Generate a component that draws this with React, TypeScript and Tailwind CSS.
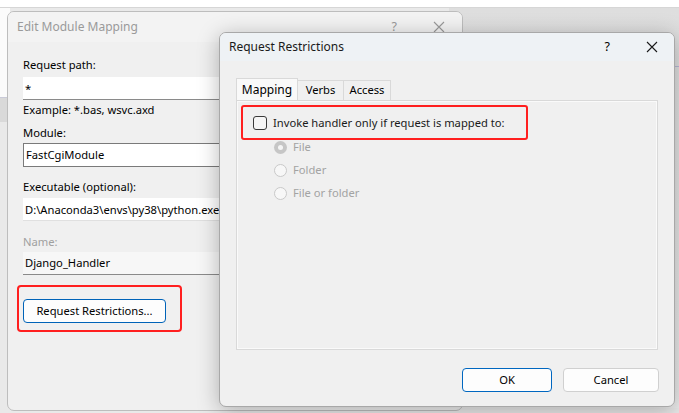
import { FC } from "react";

const CloseIcon: FC<{ color?: string }> = ({ color = "#1a1a1a" }) => (
  <svg width="12" height="12" viewBox="0 0 12 12">
    <path d="M1 1L11 11M11 1L1 11" stroke={color} strokeWidth="1.1" fill="none" />
  </svg>
);

const Radio: FC<{ label: string; checked?: boolean }> = ({ label, checked }) => (
  <div className="flex items-center h-[23px]">
    <span
      className={
        checked
          ? "w-[13px] h-[13px] rounded-full bg-[#c6c6c6] flex items-center justify-center"
          : "w-[13px] h-[13px] rounded-full border border-[#c9c9c9] bg-[#f7f7f7]"
      }
    >
      {checked && <span className="w-[5px] h-[5px] rounded-full bg-[#f5f5f5]" />}
    </span>
    <span className="ml-[6px] text-[#a3a3a3]">{label}</span>
  </div>
);

const EditModuleMapping: FC = () => (
  <div className="absolute left-[7px] top-[11px] w-[456px] h-[400px] rounded-[7px] border border-[#bdbdbd] bg-[#f0f0f0] overflow-hidden">
    <div className="h-[30px] flex items-center pl-[9px] bg-[#f3f3f3]">
      <span className="text-[#9a9a9a] text-[12px]">Edit Module Mapping</span>
      <span className="ml-auto text-[#9a9a9a] text-[12.5px] mr-[36px]">?</span>
      <span className="mr-[17px]"><CloseIcon color="#9a9a9a" /></span>
    </div>
    <div className="pl-[15px] pr-[16px] pt-[14px]">
      <div className="h-[18px] leading-[18px]">Request path:</div>
      <div className="mt-[3px] h-[23px] bg-white border-b border-[#8a8a8a] px-[2px] leading-[23px]">*</div>
      <div className="mt-[1px] h-[18px] leading-[18px]">Example: *.bas, wsvc.axd</div>
      <div className="mt-[5px] h-[18px] leading-[18px]">Module:</div>
      <div className="mt-[1px] h-[24px] bg-white border border-[#7a7a7a] px-[2px] leading-[22px]">FastCgiModule</div>
      <div className="mt-[11px] h-[18px] leading-[18px]">Executable (optional):</div>
      <div className="mt-[2px] h-[23px] bg-white border-b border-[#e0e0e0] px-[2px] leading-[23px] whitespace-nowrap overflow-hidden">
        D:\Anaconda3\envs\py38\python.exe
      </div>
      <div className="mt-[12px] h-[18px] leading-[18px] text-[#a0a0a0]">Name:</div>
      <div className="mt-[1px] h-[23px] bg-[#f7f7f7] border-b border-[#8a8a8a] px-[2px] leading-[22px]">Django_Handler</div>
      <div className="mt-[10px] ml-[-6px] w-[165px] h-[47px] rounded-[4px] border-[2.5px] border-[#ff1f1f] flex items-start pl-[4px] pt-[12px]">
        <div className="w-[143px] h-[24px] rounded-[4px] border border-[#0063b8] bg-[#fdfdfd] flex items-center justify-center">
          Request Restrictions...
        </div>
      </div>
    </div>
  </div>
);

const RequestRestrictions: FC = () => (
  <div className="absolute left-[219px] top-[32px] w-[456px] h-[375px] rounded-[7px] border border-[#a8a8a8] bg-[#f0f0f0] shadow-[0_4px_22px_rgba(0,0,0,0.28)] overflow-hidden">
    <div className="h-[28px] flex items-center pl-[9px] bg-[#eef2f5]">
      <span className="text-[12px] text-[#1a1a1a]">Request Restrictions</span>
      <span className="ml-auto text-[12.5px] mr-[36px]">?</span>
      <span className="mr-[16px]"><CloseIcon /></span>
    </div>
    <div className="pl-[16px] pr-[16px] pt-[17px]">
      <div className="flex items-end h-[22px]">
        <div className="h-[22px] w-[62px] bg-[#f9f9f9] border border-b-0 border-[#d9d9d9] flex items-center justify-center text-[12px]">
          Mapping
        </div>
        <div className="h-[20px] w-[46px] bg-[#f0f0f0] border border-l-0 border-b-0 border-[#d9d9d9] flex items-center justify-center">
          Verbs
        </div>
        <div className="h-[20px] w-[47px] bg-[#f0f0f0] border border-l-0 border-b-0 border-[#d9d9d9] flex items-center justify-center">
          Access
        </div>
      </div>
      <div className="h-[250px] border border-[#d9d9d9] bg-[#f0f0f0]">
        <div className="h-full border border-[#fafafa] pl-[3px] pt-[3px]">
          <div className="w-[287px] h-[35px] rounded-[3px] border-[2.5px] border-[#ff1f1f] flex items-center pl-[10px] pt-[1px]">
            <span className="w-[14px] h-[14px] rounded-[3px] border border-[#3a3a3a] bg-[#f6f6f6]" />
            <span className="ml-[6px] text-[#1a1a1a]">Invoke handler only if request is mapped to:</span>
          </div>
          <div className="pl-[33px] mt-[-4px]">
            <Radio label="File" checked />
            <Radio label="Folder" />
            <Radio label="File or folder" />
          </div>
        </div>
      </div>
      <div className="flex justify-end mt-[18px] mr-[-1px] gap-[11px]">
        <div className="w-[90px] h-[24px] rounded-[4px] border border-[#0067c0] bg-[#fdfdfd] flex items-center justify-center">OK</div>
        <div className="w-[96px] h-[24px] rounded-[4px] border border-[#d0d0d0] bg-[#fdfdfd] flex items-center justify-center">Cancel</div>
      </div>
    </div>
  </div>
);

const App: FC = () => {
  return (
    <div
      className="relative w-[679px] h-[413px] overflow-hidden bg-[#e9e9e9] text-[11.2px] text-black"
      style={{ fontFamily: '"Noto Sans", "Segoe UI", sans-serif' }}
    >
      <div className="h-[8px] bg-white border-b border-[#d6d6d6]" />
      <div className="h-[90px] w-[10px] bg-[#fbfbfb] border-b border-[#c9cad8]" />
      <div className="h-[24px] w-[10px] bg-[#d9d9d9]" />
      <div className="absolute right-0 top-[8px] w-[230px] h-[400px] bg-gradient-to-b from-[#dedede] to-[#ececec]" />
      <div className="absolute right-0 top-[66px] w-[10px] h-px bg-[#b8b8d4]" />
      <EditModuleMapping />
      <RequestRestrictions />
    </div>
  );
};

export default App;
